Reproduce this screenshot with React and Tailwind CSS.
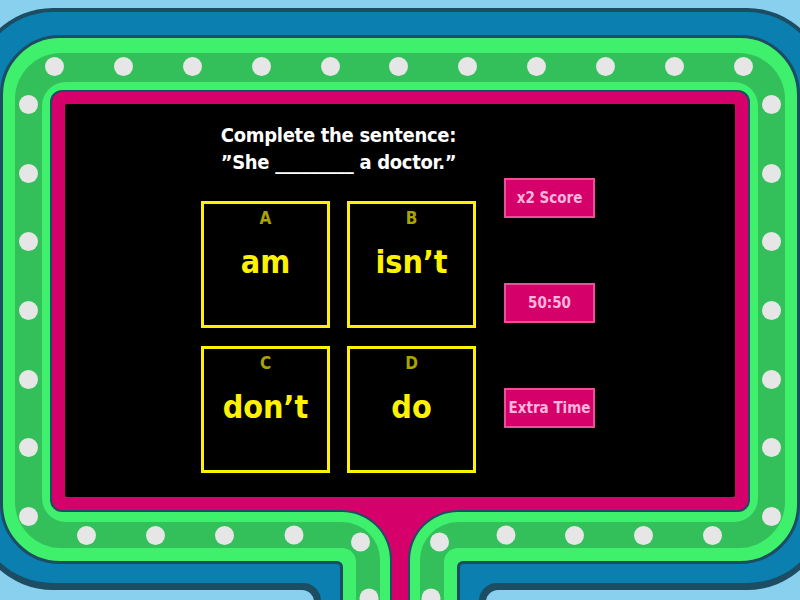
import React from "react";

const FONT = { fontFamily: "'DejaVu Sans Condensed', 'DejaVu Sans', sans-serif" };

const Dot = () => <div className="w-[19px] h-[19px] rounded-full bg-[#e6e6e6]" />;

const PINK = "#d6006b";
const DARK = "#1c4d63";
const BLUE = "#0a7fb0";
const BRIGHT = "#3ef06b";
const MID = "#33c05a";
const LIGHT = "#89d0ee";

function lp(xr, yt, r) {
  return `M200 ${yt} H${xr - r} A${r} ${r} 0 0 1 ${xr} ${yt + r} V620 H200 Z`;
}
function rp(xr, yt, r) {
  const xl = 800 - xr;
  return `M600 ${yt} H${xl + r} A${r} ${r} 0 0 0 ${xl} ${yt + r} V620 H600 Z`;
}

const layers = [
  [392, 510, 50, DARK],
  [390, 512, 48, BRIGHT],
  [380, 522, 38, MID],
  [356, 548, 14, BRIGHT],
  [343, 561, 6, DARK],
  [340, 564, 4, BLUE],
  [321, 583, 18, DARK],
  [314, 590, 12, LIGHT],
];

function BottomSplit() {
  return (
    <svg
      className="absolute left-[260px] top-[505px]"
      width="280"
      height="95"
      viewBox="260 505 280 95"
    >
      <rect x="260" y="505" width="280" height="95" fill={PINK} />
      {layers.map(([x, y, r, c], i) => (
        <React.Fragment key={i}>
          <path d={lp(x, y, r)} fill={c} />
          <path d={rp(x, y, r)} fill={c} />
        </React.Fragment>
      ))}
      {[
        [294, 535],
        [360.5, 542],
        [369, 598],
        [506, 535],
        [439.5, 542],
        [431, 598],
      ].map(([cx, cy], i) => (
        <circle key={i} cx={cx} cy={cy} r="9.5" fill="#e6e6e6" />
      ))}
    </svg>
  );
}

function AnswerBox({ letter, text }) {
  return (
    <div className="w-[129px] h-[127px] border-[3px] border-[#fff200] flex flex-col items-center">
      <div className="pt-[4px] text-[17px] leading-[20px] font-bold text-[#aaa300]">{letter}</div>
      <div className="mt-[14px] text-[32px] leading-[40px] font-bold text-[#fff200]">{text}</div>
    </div>
  );
}

function PowerButton({ label }) {
  return (
    <div className="w-[91px] h-[40px] bg-[#d6006b] border-2 border-[#ec4f98] flex items-center justify-center text-[15px] font-bold text-[#ffb6dc]">
      {label}
    </div>
  );
}

export default function App() {
  return (
    <div className="relative w-[800px] h-[600px] overflow-hidden bg-[#89d0ee] pt-[8px]" style={FONT}>
      <div className="-mx-[27px] h-[582px] rounded-[80px] border-4 border-b-[7px] border-[#1c4d63] bg-[#0a7fb0] px-[23px] pt-[23px] pb-[19px]">
        <div className="h-full rounded-[60px] border-[3px] border-[#1c4d63] bg-[#3ef06b] px-[12px] pt-[15px] pb-[13px]">
          <div className="relative h-full rounded-[46px] bg-[#33c05a] px-[27px] pt-[29px] pb-[26px]">
            {/* dots */}
            <div className="absolute left-[30px] top-[4px] w-[708px] flex justify-between">
              {Array.from({ length: 11 }).map((_, i) => (
                <Dot key={i} />
              ))}
            </div>
            <div className="absolute left-[4px] top-[42px] h-[431px] flex flex-col justify-between">
              {Array.from({ length: 7 }).map((_, i) => (
                <Dot key={i} />
              ))}
            </div>
            <div className="absolute right-[4px] top-[42px] h-[431px] flex flex-col justify-between">
              {Array.from({ length: 7 }).map((_, i) => (
                <Dot key={i} />
              ))}
            </div>
            <div className="absolute left-[62px] top-[473px] flex gap-[50px]">
              <Dot />
              <Dot />
              <Dot />
            </div>
            <div className="absolute left-[550px] top-[473px] flex gap-[50px]">
              <Dot />
              <Dot />
              <Dot />
            </div>

            <div className="h-full rounded-[24px] bg-[#3ef06b] px-[8px] pt-[8px] pb-[10px]">
              <div className="h-full rounded-[12px] border-2 border-[#1c4d63] bg-[#d6006b] px-[13px] pt-[12px] pb-[13px]">
                <div className="h-full bg-black rounded-[2px] flex pl-[136px] pt-[18px]">
                  <div className="w-[275px] flex flex-col items-center">
                    <div className="text-white font-bold text-[20px] leading-[27px] text-center tracking-[-0.3px]">
                      <div>Complete the sentence:</div>
                      <div>”She _________ a doctor.”</div>
                    </div>
                    <div className="mt-[25px] grid grid-cols-2 gap-x-[17px] gap-y-[18px]">
                      <AnswerBox letter="A" text="am" />
                      <AnswerBox letter="B" text="isn’t" />
                      <AnswerBox letter="C" text="don’t" />
                      <AnswerBox letter="D" text="do" />
                    </div>
                  </div>
                  <div className="ml-[28px] pt-[56px] flex flex-col gap-[65px]">
                    <PowerButton label="x2 Score" />
                    <PowerButton label="50:50" />
                    <PowerButton label="Extra Time" />
                  </div>
                </div>
              </div>
            </div>
          </div>
        </div>
      </div>
      <BottomSplit />
    </div>
  );
}
